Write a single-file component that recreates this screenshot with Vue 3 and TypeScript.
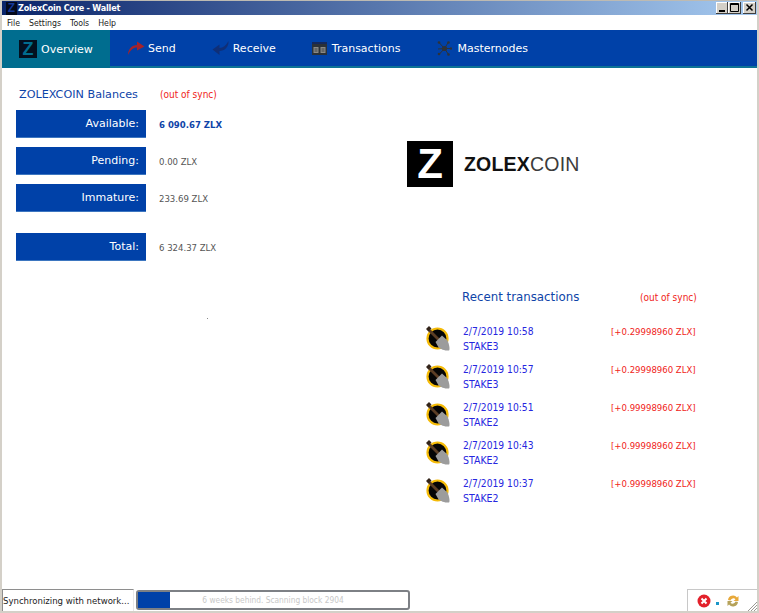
<script setup lang="ts">
const menus: string[] = ['File', 'Settings', 'Tools', 'Help']
const balances = [
  { label: 'Available:', value: '6 090.67 ZLX', strong: true, cls: '' },
  { label: 'Pending:', value: '0.00 ZLX', strong: false, cls: '' },
  { label: 'Immature:', value: '233.69 ZLX', strong: false, cls: '' },
  { label: 'Total:', value: '6 324.37 ZLX', strong: false, cls: 'total' },
]
const txs = [
  { date: '2/7/2019 10:58', name: 'STAKE3', amount: '[+0.29998960 ZLX]' },
  { date: '2/7/2019 10:57', name: 'STAKE3', amount: '[+0.29998960 ZLX]' },
  { date: '2/7/2019 10:51', name: 'STAKE2', amount: '[+0.99998960 ZLX]' },
  { date: '2/7/2019 10:43', name: 'STAKE2', amount: '[+0.99998960 ZLX]' },
  { date: '2/7/2019 10:37', name: 'STAKE2', amount: '[+0.99998960 ZLX]' },
]
</script>

<template>
  <div class="window">
    <header class="titlebar">
      <span class="title-icon">Z</span>
      <span class="title-text">ZolexCoin Core - Wallet</span>
      <div class="win-buttons">
        <span class="win-btn win-min"><svg width="12" height="12" viewBox="0 0 12 12"><rect x="3" y="8" width="6" height="2" fill="#000" /></svg></span>
        <span class="win-btn"><svg width="13" height="12" viewBox="0 0 13 12"><path d="M2.500 1.500h8v8h-8zM2.500 2.500h8" fill="none" stroke="#000" /></svg></span>
        <span class="win-btn win-close"><svg width="13" height="12" viewBox="0 0 13 12"><path d="M3.500 2.500l6 6M9.500 2.500l-6 6" fill="none" stroke="#000" stroke-width="1.500" /></svg></span>
      </div>
    </header>

    <nav class="menubar">
      <span v-for="m in menus" :key="m" class="menu-item">{{ m }}</span>
    </nav>

    <div class="toolbar">
      <div class="tool tool-active">
        <span class="tool-logo">Z</span>
        <span>Overview</span>
      </div>
      <div class="tool tool-send">
        <svg width="18" height="16" viewBox="0 0 18 16"><path d="M1 15C1 9 5 5 10 5V1.500L17.500 6.500 10 10.500V7.500C6 7.500 3.500 10 1 15Z" fill="#a5222a" /></svg>
        <span>Send</span>
      </div>
      <div class="tool tool-receive">
        <svg width="17" height="16" viewBox="0 0 17 16"><path d="M16.500 1C17 7 12.500 11 7.500 11V15L0.500 9.500 7.500 4.500V8C11 8 14 5.500 16.500 1Z" fill="#0f2f78" /></svg>
        <span>Receive</span>
      </div>
      <div class="tool tool-tx">
        <svg width="15" height="13" viewBox="0 0 15 13">
          <rect width="15" height="13" fill="#2b3138" />
          <rect y="0" width="15" height="2" fill="#14285c" />
          <rect x="1.500" y="5" width="5" height="6" fill="#8a8a86" />
          <rect x="8.500" y="5" width="5" height="6" fill="#8a8a86" />
          <path d="M2.500 7h3M2.500 9h3M9.500 7h3M9.500 9h3" stroke="#2b3138" stroke-width="0.800" />
        </svg>
        <span>Transactions</span>
      </div>
      <div class="tool tool-mn">
        <svg width="15" height="15" viewBox="0 0 15 15">
          <path d="M2 1.500L7.500 7.500M11.500 1L7.500 7.500M14 7.500H7.500M11.500 13.500L7.500 7.500M2 13.500L7.500 7.500M1 8L7.500 7.500" stroke="#2e3238" stroke-width="1" />
          <circle cx="7.500" cy="7.500" r="2.600" fill="#2e3238" />
          <circle cx="2" cy="1.500" r="1.300" fill="#2e3238" />
          <circle cx="11.500" cy="1.500" r="1.300" fill="#2e3238" />
          <circle cx="14" cy="7.500" r="1.200" fill="#2e3238" />
          <circle cx="2" cy="13" r="1.300" fill="#2e3238" />
          <circle cx="11.500" cy="13.500" r="1.300" fill="#2e3238" />
        </svg>
        <span>Masternodes</span>
      </div>
    </div>

    <main class="content">
      <section class="left">
        <div class="balance-head">
          <span class="section-title">ZOLEXCOIN Balances</span>
          <span class="sync">(out of sync)</span>
        </div>
        <div v-for="b in balances" :key="b.label" class="balance-row" :class="b.cls">
          <div class="balance-label">{{ b.label }}</div>
          <div class="balance-value" :class="{ strong: b.strong }">{{ b.value }}</div>
        </div>
      </section>

      <section class="right">
        <div class="brand">
          <span class="brand-mark">Z</span>
          <span class="brand-name"><b>ZOLEX</b>COIN</span>
        </div>
        <div class="recent-head">
          <span class="recent-title">Recent transactions</span>
          <span class="sync">(out of sync)</span>
        </div>
        <div class="tx-list">
          <div v-for="t in txs" :key="t.date" class="tx">
            <svg class="tx-icon" width="26" height="28" viewBox="0 0 26 28">
              <circle cx="12.500" cy="13.500" r="10" fill="#050505" stroke="#f5bb08" stroke-width="2.200" />
              <path d="M3.500 4.500L14.500 15.500" stroke="#5b3d24" stroke-width="2.800" />
              <path d="M1 4L4 1 6.500 3.500 3.500 6.500Z" fill="#33241a" />
              <path d="M10.500 17L17 10.500 22.500 15.500C24.500 20 25 24.500 24 25.500 22 26 15.500 25 13 21.500Z" fill="#9c9c9c" />
            </svg>
            <div class="tx-text">
              <div class="tx-date">{{ t.date }}</div>
              <div class="tx-name">{{ t.name }}</div>
            </div>
            <div class="tx-amount">{{ t.amount }}</div>
          </div>
        </div>
      </section>
      <span class="speck"></span>
    </main>

    <footer class="statusbar">
      <div class="status-text">Synchronizing with network...</div>
      <div class="progress">
        <div class="progress-fill"></div>
        <span class="progress-label">6 weeks behind. Scanning block 2904</span>
      </div>
      <div class="tray">
        <svg width="14" height="14" viewBox="0 0 14 14">
          <circle cx="7" cy="7" r="6.500" fill="#e3212b" />
          <path d="M4.500 4.500l5 5M9.500 4.500l-5 5" stroke="#fff" stroke-width="2" />
        </svg>
        <span class="tray-dot"></span>
        <svg class="tray-sync" width="14" height="14" viewBox="0 0 14 14">
          <path d="M2 6a5 5 0 0 1 9-2.500L12.500 2v5h-5l2-1.800A3 3 0 0 0 4.500 6.500Z" fill="#e8a93a" />
          <path d="M12 8a5 5 0 0 1-9 2.500L1.500 12V7h5L4.500 8.800A3 3 0 0 0 9.500 7.500Z" fill="#b5a25a" />
        </svg>
        <svg class="grip" width="10" height="10" viewBox="0 0 10 10">
          <path d="M10 1L1 10M10 4L4 10M10 7L7 10" stroke="#9c9a94" stroke-width="1" />
        </svg>
      </div>
    </footer>
  </div>
</template>

<style>
html, body { margin: 0; padding: 0; background: #fff; }
</style>

<style scoped>
.window {
  width: 759px;
  height: 613px;
  box-sizing: border-box;
  display: flex;
  flex-direction: column;
  overflow: hidden;
  background: #fff;
  font-family: "DejaVu Sans", Verdana, sans-serif;
  font-size: 10px;
  border-left: 2px solid #d4d0c8;
  border-right: 2px solid #d4d0c8;
}
.titlebar {
  margin: 0 -2px;
  height: 15px;
  flex: none;
  display: flex;
  align-items: center;
  box-sizing: border-box;
  border-top: 1px solid #bdbab2;
  background: linear-gradient(90deg, #0a246a 0%, #a6caf0 100%);
  color: #fff;
  padding-left: 6px;
}
.title-icon {
  width: 11px;
  height: 13px;
  background: #050a1c;
  color: #16399a;
  font-family: "Liberation Sans", sans-serif;
  font-weight: 700;
  font-size: 12px;
  line-height: 13px;
  text-align: center;
  margin-right: 1px;
}
.title-text {
  font-family: "DejaVu Sans Condensed", "DejaVu Sans", sans-serif;
  font-weight: 700;
  font-size: 9px;
  letter-spacing: -0.200px;
}
.win-buttons {
  margin-left: auto;
  margin-right: 3px;
  display: flex;
}
.win-btn {
  width: 13px;
  height: 12px;
  background: #d4d0c8;
  box-shadow: inset -1px -1px 0 #404040, inset 1px 1px 0 #fff;
  display: block;
}
.win-min { width: 12px; }
.win-btn svg { display: block; }
.win-close { margin-left: 2px; }
.menubar {
  height: 15px;
  flex: none;
  display: flex;
  align-items: center;
  padding-left: 5px;
  gap: 9px;
  color: #1a1a1a;
  font-family: "DejaVu Sans Condensed", "DejaVu Sans", sans-serif;
  font-size: 8.700px;
}
.toolbar {
  height: 38px;
  flex: none;
  display: flex;
  align-items: stretch;
  box-sizing: border-box;
  background: #0041a8;
  border-bottom: 2px solid #0d7396;
  color: #fff;
  font-size: 11px;
}
.tool {
  display: flex;
  align-items: center;
  gap: 4px;
}
.tool-active {
  width: 108px;
  box-sizing: border-box;
  padding-left: 17px;
  background: #006d8f;
  margin-bottom: -2px;
}
.tool-logo {
  width: 18px;
  height: 18px;
  background: #03101f;
  color: #006d8f;
  font-family: "Liberation Sans", sans-serif;
  font-weight: 700;
  font-size: 18px;
  line-height: 18px;
  text-align: center;
}
.tool-send { margin-left: 17px; gap: 3px; }
.tool-receive { margin-left: 36px; gap: 4px; }
.tool-tx { margin-left: 36px; gap: 5px; }
.tool-mn { margin-left: 37px; gap: 5px; }
.content {
  position: relative;
  flex: 1;
  min-height: 0;
  display: flex;
}
.left {
  width: 405px;
  flex: none;
  box-sizing: border-box;
  padding: 19px 0 0 14px;
}
.balance-head {
  display: flex;
  align-items: center;
  height: 14px;
  margin-bottom: 9px;
  padding-left: 3px;
}
.section-title {
  width: 141px;
  color: #0e44a8;
  font-size: 11.200px;
  white-space: nowrap;
}
.sync {
  color: #f01c20;
  font-family: "DejaVu Sans Condensed", "DejaVu Sans", sans-serif;
  font-size: 10px;
}
.balance-row {
  display: flex;
  align-items: center;
  margin-bottom: 9px;
}
.balance-row.total { margin-top: 21px; }
.balance-label {
  width: 130px;
  height: 28px;
  box-sizing: border-box;
  line-height: 28px;
  padding-right: 7px;
  text-align: right;
  background: #0041a8;
  border-bottom: 1px solid #3d76c0;
  color: #fff;
  font-size: 11px;
}
.balance-value {
  margin-left: 13px;
  color: #555;
  font-family: "DejaVu Sans Condensed", "DejaVu Sans", sans-serif;
  font-size: 9.500px;
}
.balance-value.strong {
  color: #0e44a8;
  font-weight: 700;
}
.right {
  flex: 1;
  min-width: 0;
  box-sizing: border-box;
  padding: 73px 0 0 0;
}
.brand {
  display: flex;
  align-items: center;
  height: 46px;
}
.brand-mark {
  width: 46px;
  height: 46px;
  background: #000;
  color: #fff;
  font-family: "Liberation Sans", sans-serif;
  font-weight: 700;
  font-size: 42px;
  line-height: 46px;
  text-align: center;
}
.brand-name {
  margin-left: 11px;
  font-family: "Liberation Sans", Arial, sans-serif;
  font-size: 19.500px;
  color: #3c3c3c;
  letter-spacing: 0.200px;
}
.brand-name b {
  color: #111;
  font-weight: 700;
}
.recent-head {
  display: flex;
  align-items: center;
  height: 16px;
  margin-top: 102px;
  padding-left: 55px;
}
.recent-title {
  width: 178px;
  color: #0e44a8;
  font-size: 11.800px;
  white-space: nowrap;
}
.tx-list {
  margin-top: 19px;
  display: flex;
  flex-direction: column;
  gap: 8px;
}
.tx {
  display: flex;
  height: 30px;
  padding-left: 18px;
  align-items: center;
  color: #2626e0;
  font-family: "DejaVu Sans Condensed", "DejaVu Sans", sans-serif;
}
.tx-icon { flex: none; }
.tx-text {
  margin-left: 12px;
  width: 148px;
  line-height: 15px;
  white-space: nowrap;
}
.tx-date { font-size: 10.200px; }
.tx-name { font-size: 10.500px; }
.tx-amount {
  color: #f01c20;
  align-self: flex-start;
  line-height: 15px;
  font-size: 9.500px;
  white-space: nowrap;
}
.speck {
  position: absolute;
  left: 205px;
  top: 250px;
  width: 1px;
  height: 1px;
  background: #8a8a8a;
}
.statusbar {
  height: 24px;
  flex: none;
  display: flex;
  align-items: center;
  box-sizing: border-box;
  border-bottom: 2px solid #d4d0c8;
}
.status-text {
  width: 132px;
  height: 22px;
  box-sizing: border-box;
  border-top: 1px solid #8e8e8e;
  border-left: 1px solid #8e8e8e;
  border-right: 1px solid #e8e8e8;
  line-height: 21px;
  color: #222;
  font-family: "DejaVu Sans Condensed", "DejaVu Sans", sans-serif;
  font-size: 9.500px;
  white-space: nowrap;
}
.progress {
  position: relative;
  width: 274px;
  height: 20px;
  margin-left: 2px;
  box-sizing: border-box;
  border: 2px solid #7d8085;
  border-radius: 3px;
  background: #fff;
  display: flex;
  align-items: center;
  justify-content: center;
}
.progress-fill {
  position: absolute;
  left: 0;
  top: 0;
  bottom: 0;
  width: 32px;
  background: #0041a8;
}
.progress-label {
  position: relative;
  color: #c8c8c8;
  font-family: "DejaVu Sans Condensed", "DejaVu Sans", sans-serif;
  font-size: 8.300px;
  white-space: nowrap;
}
.tray {
  position: relative;
  margin-left: auto;
  width: 70px;
  height: 22px;
  box-sizing: border-box;
  border-top: 1px solid #c8c8c8;
  border-left: 1px solid #c8c8c8;
  display: flex;
  align-items: center;
  padding-left: 9px;
}
.tray-dot {
  width: 3px;
  height: 3px;
  margin-left: 5px;
  margin-top: 5px;
  background: #1b96c8;
}
.tray-sync { margin-left: 7px; }
.grip {
  position: absolute;
  right: 0;
  bottom: 0;
}
</style>
